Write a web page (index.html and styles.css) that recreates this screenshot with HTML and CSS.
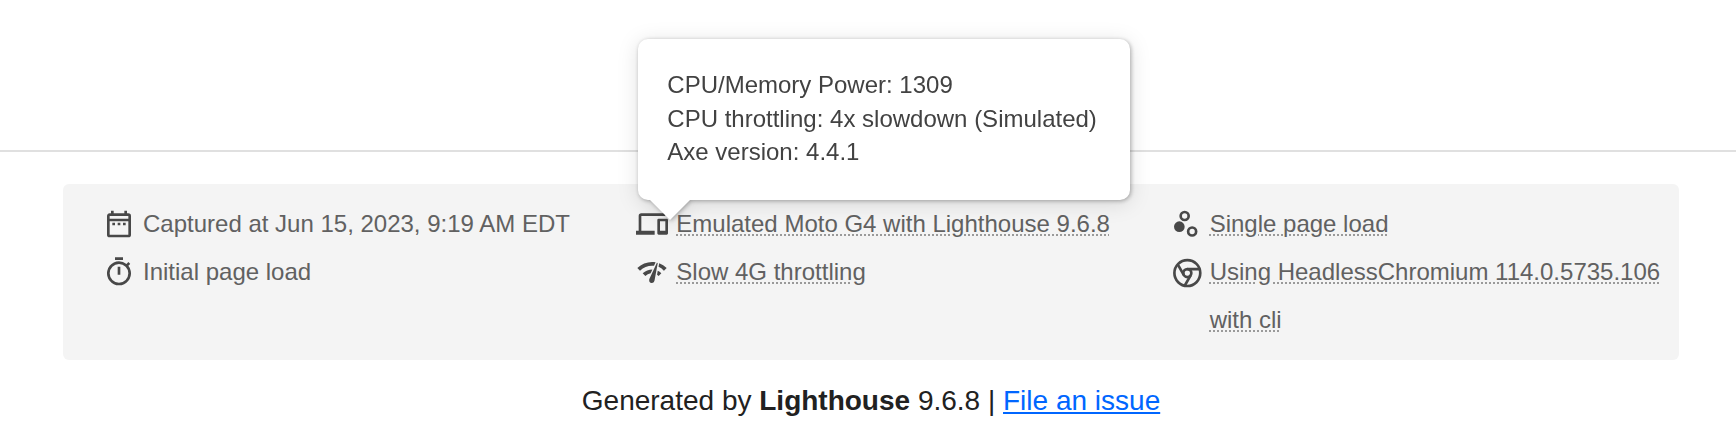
FILE: index.html
```html
<!DOCTYPE html>
<html lang="en">
<head>
<meta charset="utf-8">
<title>Lighthouse Report</title>
<link rel="stylesheet" href="styles.css">
</head>
<body>
<footer class="footer">
  <ul class="meta">
    <li class="item">
      <svg class="icon" viewBox="0 0 24 24"><path d="M7 11h2v2H7v-2zm14-5v14a2 2 0 01-2 2H5a2 2 0 01-2-2l.01-14c0-1.1.88-2 1.99-2h1V2h2v2h8V2h2v2h1a2 2 0 012 2zM5 8h14V6H5v2zm14 12V10H5v10h14zm-4-7h2v-2h-2v2zm-4 0h2v-2h-2v2z"/></svg>
      <span>Captured at Jun 15, 2023, 9:19 AM EDT</span>
    </li>
    <li class="item">
      <svg class="icon" viewBox="0 0 24 24"><path d="M4 6h18V4H4a2 2 0 00-2 2v11H0v3h14v-3H4V6zm19 2h-6a1 1 0 00-1 1v10c0 .6.5 1 1 1h6c.6 0 1-.5 1-1V9c0-.6-.5-1-1-1zm-1 9h-4v-7h4v7z"/></svg>
      <span class="hint">Emulated Moto G4 with Lighthouse 9.6.8</span>
      <div class="tooltip">CPU/Memory Power: 1309<br>CPU throttling: 4x slowdown (Simulated)<br>Axe version: 4.4.1</div>
    </li>
    <li class="item">
      <svg class="icon" viewBox="0 0 24 24"><circle cx="7" cy="14" r="4"/><g class="stroked"><circle cx="11" cy="6" r="3"/><circle cx="16.6" cy="17.6" r="3"/></g></svg>
      <span class="hint">Single page load</span>
    </li>
    <li class="item">
      <svg class="icon" viewBox="0 0 24 24"><path d="M15 1H9v2h6V1zm-4 13h2V8h-2v6zm8.03-6.61l1.42-1.42c-.43-.51-.9-.99-1.41-1.41l-1.42 1.42A8.96 8.96 0 0012 4a9 9 0 107.03 3.39zM12 20a7 7 0 110-14 7 7 0 010 14z"/></svg>
      <span>Initial page load</span>
    </li>
    <li class="item">
      <svg class="icon" viewBox="0 0 24 24"><path d="M15.9 5c-.2 0-.3 0-.4.2v.2L10.1 17a2 2 0 00-.2 1 2 2 0 004 .4l2.4-12.9c0-.3-.2-.5-.5-.5zM1 9l2 2c2.9-2.9 6.8-4 10.5-3.6l1.2-2.7C10 3.8 4.7 5.3 1 9zm20 2 2-2a15.4 15.4 0 00-5.6-3.5l-.5 2.6c1.5.6 2.8 1.6 4 2.9zm-4 4 2-2a9.9 9.9 0 00-2.7-1.9l-.5 3 1.2.9zm-12-2 2 2a7.1 7.1 0 014-2l1.3-2.9C9.7 10.1 7 11 5 13z"/></svg>
      <span class="hint">Slow 4G throttling</span>
    </li>
    <li class="item">
      <svg class="icon" viewBox="0 0 24 24"><g class="stroked" transform="translate(1 .8)"><circle cx="12" cy="12" r="9.7"/><circle cx="12" cy="12" r="3"/><path d="M12 9h9M14.6 13.5l-4.5 7.8M9.4 13.5L4.9 5.7"/></g></svg>
      <span class="hint">Using HeadlessChromium 114.0.5735.106 with cli</span>
    </li>
  </ul>
  <p class="generated">Generated by <b>Lighthouse</b> 9.6.8 | <a class="link" href="#">File an issue</a></p>
</footer>
</body>
</html>
```
FILE: styles.css
```css
body {
  margin: 0;
  padding-top: 150px;
  background: #fff;
  color: #212121;
  font-family: "Liberation Sans", Arial, sans-serif;
}

.footer {
  border-top: 2px solid #e0e0e0;
  padding: 32px 57px 0 63px;
}

.meta {
  display: grid;
  grid-template-columns: repeat(3, 1fr);
  margin: 0;
  padding: 16px 8px;
  list-style: none;
  background: #f4f4f4;
  border-radius: 6px;
  color: #616161;
  font-size: 24px;
  line-height: 48px;
}

.item {
  position: relative;
  display: flex;
  align-items: flex-start;
  gap: 8px;
  padding-left: 32px;
}

.icon {
  flex: none;
  width: 32px;
  height: 32px;
  margin-top: 8px;
  fill: #484848;
}

.stroked {
  fill: none;
  stroke: #484848;
  stroke-width: 2;
}

.hint {
  text-decoration: underline dotted #9a9a9a 2px;
  text-underline-offset: 2px;
}

.tooltip {
  position: absolute;
  left: 34px;
  bottom: 48px;
  box-sizing: border-box;
  width: 492px;
  height: 161px;
  padding: 29px;
  border-radius: 10px;
  background: #fff;
  color: #424242;
  line-height: 33.6px;
  white-space: nowrap;
  filter: drop-shadow(1px 1px 2px rgba(0, 0, 0, .3)) drop-shadow(0 3px 10px rgba(0, 0, 0, .12));
}

.tooltip::after {
  content: "";
  position: absolute;
  left: 12px;
  top: 100%;
  border: 20px solid transparent;
  border-top-color: #fff;
  border-bottom: 0;
}

.generated {
  margin: 25px 0 0;
  text-align: center;
  font-size: 28px;
  line-height: 32px;
}

.link {
  color: #0066ff;
  text-decoration-thickness: 2px;
  text-underline-offset: 2px;
}
```
